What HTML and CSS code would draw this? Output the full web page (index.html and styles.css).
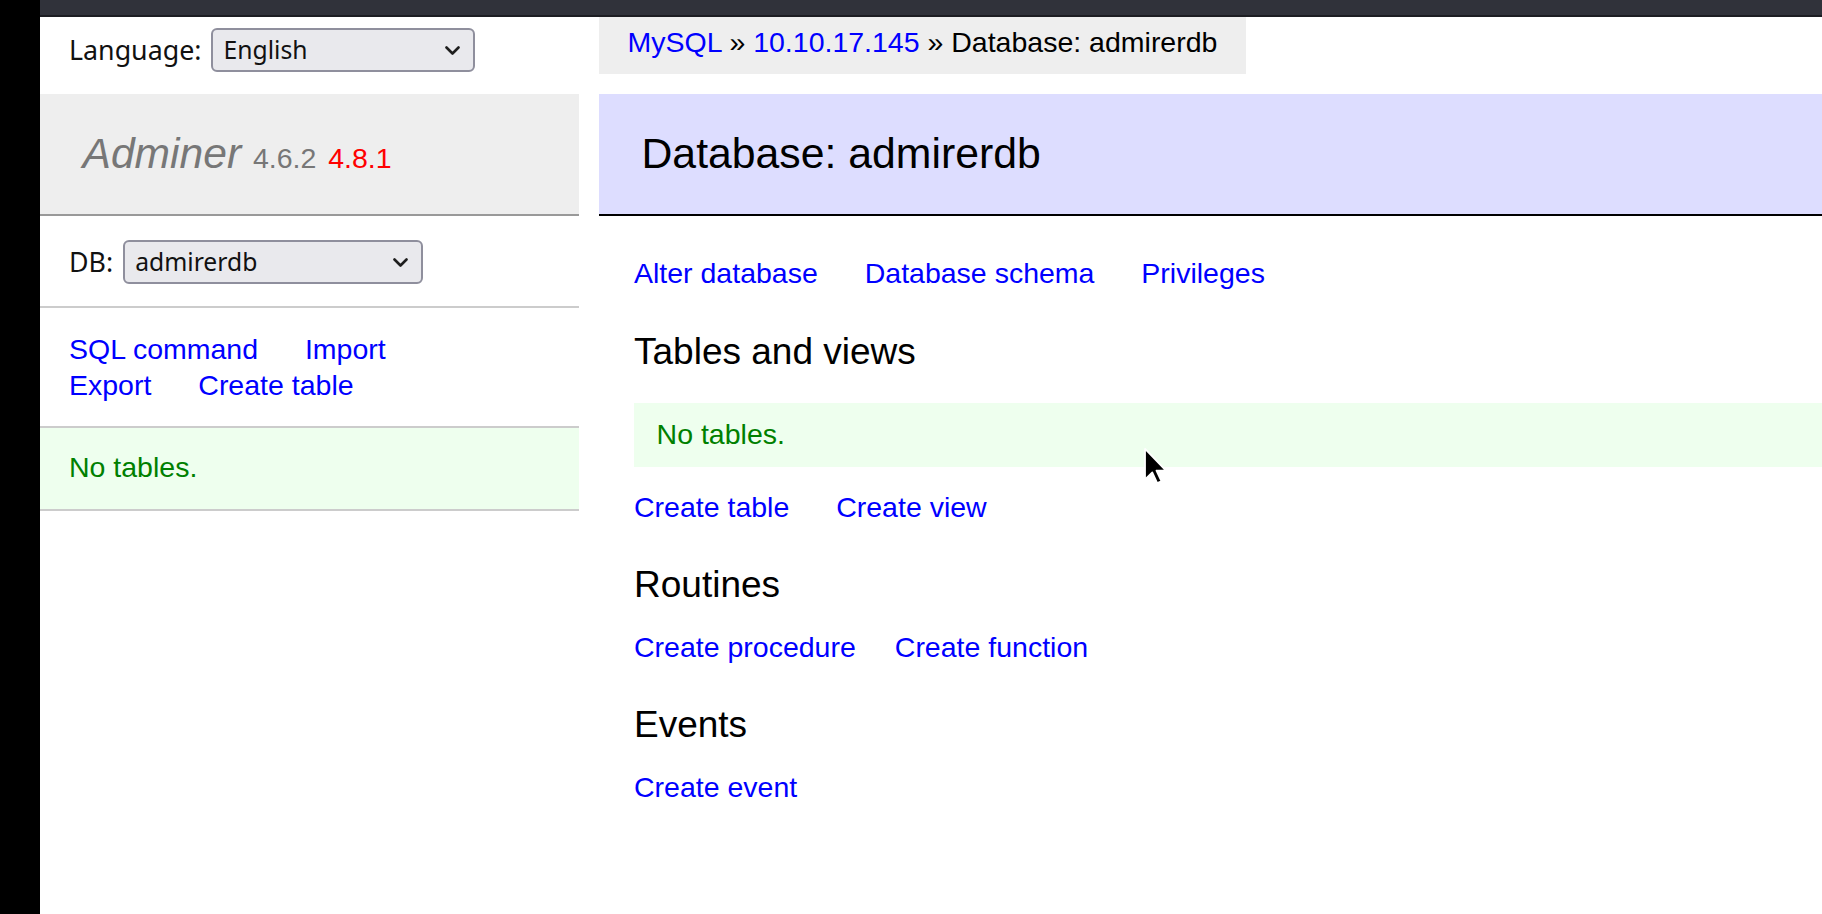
FILE: index.html
```html
<!DOCTYPE html>
<html lang="en">
<head>
<meta charset="utf-8">
<title>Database: admirerdb - Adminer</title>
<link rel="stylesheet" href="styles.css">
</head>
<body>
<div class="screen">
  <div class="edge"></div>
  <div class="window">
    <div class="chrome"></div>
    <div class="page">
      <aside class="menu">
        <div class="lang">
          <span class="field-label">Language:</span>
          <div class="select select-lang">
            <span>English</span>
            <svg class="chev" width="15" height="9" viewBox="0 0 15 9"><path d="M1.5 1.5 L7.5 7.5 L13.5 1.5" fill="none" stroke="#1e1e1e" stroke-width="2.6" stroke-linecap="round" stroke-linejoin="round"/></svg>
          </div>
        </div>
        <h1 class="brand"><a class="brand-name">Adminer</a> <span class="version">4.6.2</span> <a class="version new">4.8.1</a></h1>
        <div class="menu-block db-row">
          <span class="field-label">DB:</span>
          <div class="select select-db">
            <span>admirerdb</span>
            <svg class="chev" width="15" height="9" viewBox="0 0 15 9"><path d="M1.5 1.5 L7.5 7.5 L13.5 1.5" fill="none" stroke="#1e1e1e" stroke-width="2.6" stroke-linecap="round" stroke-linejoin="round"/></svg>
          </div>
        </div>
        <p class="menu-block links"><a>SQL command</a> <a>Import</a><br><a>Export</a> <a>Create table</a></p>
        <p class="menu-block menu-msg">No tables.</p>
      </aside>
      <main class="content">
        <div class="crumbs"><a>MySQL</a> » <a>10.10.17.145</a> » Database: admirerdb</div>
        <h2 class="title">Database: admirerdb</h2>
        <div class="sections">
          <p class="links"><a>Alter database</a> <a>Database schema</a> <a>Privileges</a></p>
          <h3 class="first">Tables and views</h3>
          <p class="message">No tables.</p>
          <p class="links after-msg"><a>Create table</a> <a>Create view</a></p>
          <h3>Routines</h3>
          <p class="links"><a>Create procedure</a><a>Create function</a></p>
          <h3>Events</h3>
          <p class="links"><a>Create event</a></p>
        </div>
      </main>
    </div>
  </div>
  <svg class="cursor" width="25" height="38" viewBox="0 0 13 20"><path d="M1 1 L1 17 L4.8 13.4 L7.4 19 L9.6 18 L7 12.4 L12 12.4 Z" fill="#000" stroke="#fff" stroke-width="0.9" stroke-linejoin="round"/></svg>
</div>
</body>
</html>
```
FILE: styles.css
```css
html, body {
  margin: 0;
  padding: 0;
}
body {
  background: #fff;
  color: #000;
  font-family: "Liberation Sans", Arial, sans-serif;
  font-size: 28.5px;
  line-height: 35.6px;
  overflow: hidden;
}
.screen {
  position: relative;
  display: flex;
  width: 1822px;
  height: 914px;
  overflow: hidden;
}
.edge {
  flex: none;
  width: 40px;
  background: #000;
}
.window {
  flex: 1;
  min-width: 0;
  display: flex;
  flex-direction: column;
}
.chrome {
  flex: none;
  height: 17px;
  box-sizing: border-box;
  background: #30323a;
  border-bottom: 2px solid #1c1d22;
}
.page {
  flex: 1;
  display: flex;
  min-height: 0;
}
a {
  color: #00f;
  text-decoration: none;
}

/* sidebar */
.menu {
  flex: none;
  width: 539px;
}
.lang {
  display: flex;
  align-items: center;
  gap: 10px;
  height: 44px;
  padding: 11px 0 22px 29px;
}
.field-label {
  font-family: "Noto Sans", sans-serif;
  font-size: 26.8px;
  color: #111;
}
.select {
  display: flex;
  align-items: center;
  justify-content: space-between;
  box-sizing: border-box;
  height: 44px;
  padding: 0 13px 0 10px;
  border: 2px solid #8f8f9d;
  border-radius: 6px;
  background: #e9e9ed;
  font-family: "Noto Sans", sans-serif;
  font-size: 24.7px;
  color: #111;
}
.select-lang {
  width: 264px;
}
.select-db {
  width: 300px;
}
.chev {
  flex: none;
}
.brand {
  margin: 0;
  padding: 33px 42.5px 34px;
  font-size: 42.6px;
  line-height: 53px;
  font-weight: normal;
  background: #eee;
  border-bottom: 2px solid #999;
}
.brand-name {
  color: #777;
  font-style: italic;
}
.version {
  color: #777;
  font-size: 28.5px;
  line-height: 1;
}
.version.new {
  color: #f00;
}
.menu-block {
  margin: 0;
  padding: 24px 29px 22.6px;
  border-bottom: 2px solid #ccc;
}
.db-row {
  display: flex;
  align-items: center;
  gap: 10px;
  padding-bottom: 22px;
}
.links a {
  margin-right: 39px;
  white-space: nowrap;
}
.menu-msg {
  padding: 22.6px 29px;
  background: #efe;
  color: green;
}

/* content */
.content {
  flex: 1;
  min-width: 0;
  padding-left: 20px;
}
.crumbs {
  width: fit-content;
  height: 57px;
  line-height: 51px;
  padding: 0 28.5px;
  background: #eee;
  white-space: nowrap;
}
.title {
  margin: 20px 0 39.5px;
  padding: 33px 42.5px 34px;
  font-size: 42.75px;
  line-height: 53px;
  font-weight: normal;
  background: #ddf;
  border-bottom: 2px solid #000;
  white-space: nowrap;
}
.sections {
  padding-left: 35px;
}
.sections .links {
  margin: 21.5px 0 0;
}
.sections .links.after-msg {
  margin-top: 23px;
}
.sections h3 {
  margin: 37px 0 0;
  font-size: 37px;
  line-height: 46px;
  font-weight: normal;
}
.sections h3.first {
  margin-top: 38px;
}
.message {
  margin: 28px 0 0;
  padding: 14px 22.6px;
  background: #efe;
  color: green;
}
.cursor {
  position: absolute;
  left: 1143px;
  top: 447px;
}
```
